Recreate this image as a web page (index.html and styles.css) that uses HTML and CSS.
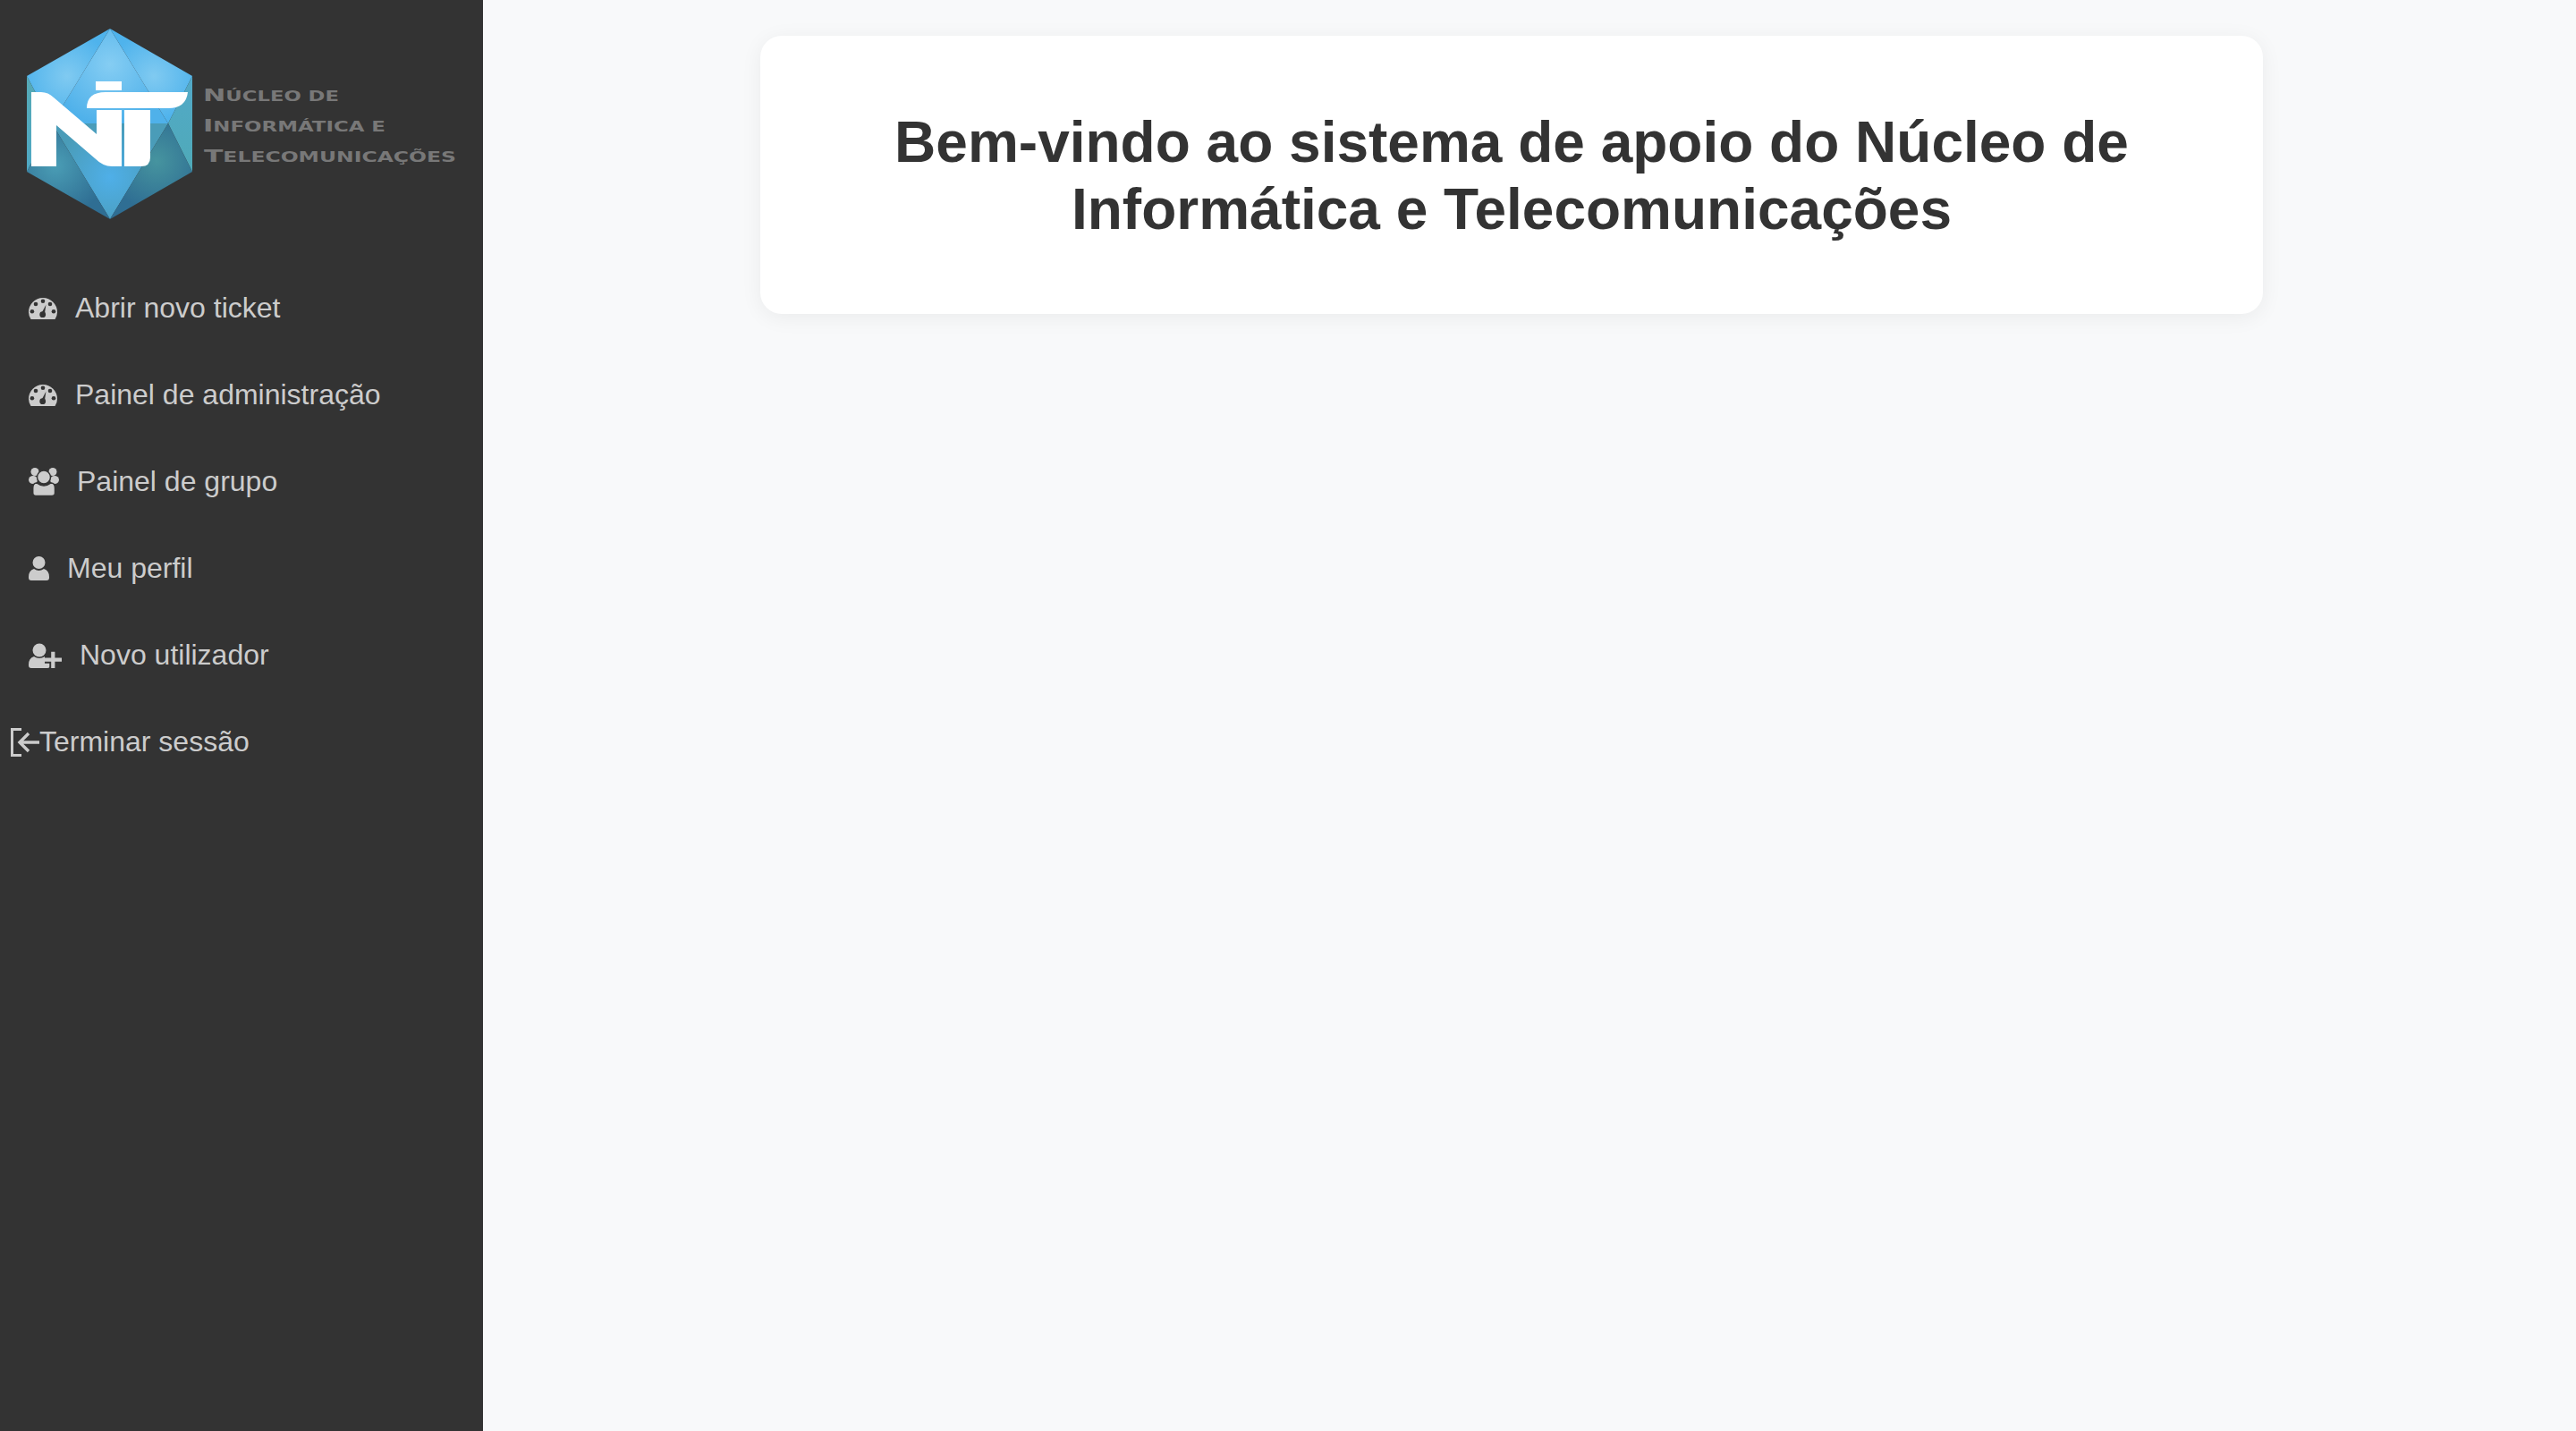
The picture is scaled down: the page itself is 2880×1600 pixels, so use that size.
FILE: index.html
```html
<!DOCTYPE html>
<html lang="pt">
<head>
    <meta charset="UTF-8">
    <meta name="viewport" content="width=device-width, initial-scale=1.0">
    <title>Núcleo de Informática e Telecomunicações</title>
    <link rel="stylesheet" href="styles.css">
</head>
<body>
    <aside class="sidebar">
        <div class="logo">
            <svg class="logo-svg" width="540" height="296" viewBox="0 0 540 296" xmlns="http://www.w3.org/2000/svg">
                <defs>
                    <radialGradient id="topCenter" gradientUnits="userSpaceOnUse" cx="123" cy="72" r="68">
                        <stop offset="0" stop-color="#85cdf3"/>
                        <stop offset="1" stop-color="#4fb1ea"/>
                    </radialGradient>
                    <radialGradient id="topLeft" gradientUnits="userSpaceOnUse" cx="75" cy="85" r="50">
                        <stop offset="0" stop-color="#80caf1"/>
                        <stop offset="1" stop-color="#4fb3ec"/>
                    </radialGradient>
                    <radialGradient id="topRight" gradientUnits="userSpaceOnUse" cx="172" cy="85" r="50">
                        <stop offset="0" stop-color="#80caf1"/>
                        <stop offset="1" stop-color="#4fb3ec"/>
                    </radialGradient>
                    <radialGradient id="botCenter" gradientUnits="userSpaceOnUse" cx="123" cy="198" r="62">
                        <stop offset="0" stop-color="#4fafe8"/>
                        <stop offset="1" stop-color="#4a9cb8"/>
                    </radialGradient>
                    <radialGradient id="botLeft" gradientUnits="userSpaceOnUse" cx="62" cy="185" r="58">
                        <stop offset="0" stop-color="#4a9db5"/>
                        <stop offset="1" stop-color="#2f6e93"/>
                    </radialGradient>
                    <radialGradient id="botRight" gradientUnits="userSpaceOnUse" cx="175" cy="180" r="55">
                        <stop offset="0" stop-color="#46949f"/>
                        <stop offset="1" stop-color="#2f6e93"/>
                    </radialGradient>
                    <linearGradient id="sideLeft" x1="0" y1="0" x2="0" y2="1">
                        <stop offset="0" stop-color="#55a9b5"/>
                        <stop offset="1" stop-color="#4fa8c4"/>
                    </linearGradient>
                    <linearGradient id="sideRight" x1="0" y1="0" x2="0" y2="1">
                        <stop offset="0" stop-color="#52a9c8"/>
                        <stop offset="1" stop-color="#4faab8"/>
                    </linearGradient>
                </defs>
                <polygon points="123,32 58,138 188,138" fill="url(#topCenter)"/>
                <polygon points="123,32 30,85 58,138" fill="url(#topLeft)"/>
                <polygon points="123,32 215,85 188,138" fill="url(#topRight)"/>
                <polygon points="30,85 58,138 30,192" fill="url(#sideLeft)"/>
                <polygon points="215,85 188,138 215,192" fill="url(#sideRight)"/>
                <polygon points="58,138 188,138 123,245" fill="url(#botCenter)"/>
                <polygon points="30,192 58,138 123,245" fill="url(#botLeft)"/>
                <polygon points="215,192 188,138 123,245" fill="url(#botRight)"/>
                <path fill="#fff" d="M35 103 H46 Q54 103 60 109 L108 150 V123 H136 V186 H125 Q115 186 106 177 L63 140 V186 H35 Z"/>
                <path fill="#fff" d="M139 123 H168 V176 Q168 186 158 186 H139 Z"/>
                <path fill="#fff" d="M97 121 Q97 103 118 103 H210 Q208 121 188 121 Z"/>
                <rect fill="#fff" x="107" y="91" width="29" height="10"/>
                <text class="logo-text" x="227" y="113" textLength="152" lengthAdjust="spacingAndGlyphs"><tspan class="logo-cap">N</tspan>úcleo de</text>
                <text class="logo-text" x="227" y="147" textLength="204" lengthAdjust="spacingAndGlyphs"><tspan class="logo-cap">I</tspan>nformática e</text>
                <text class="logo-text" x="228" y="181" textLength="282" lengthAdjust="spacingAndGlyphs"><tspan class="logo-cap">T</tspan>elecomunicações</text>
            </svg>
        </div>
        <nav class="nav">
            <a class="nav-item" href="#">
                <svg class="icon" width="32" height="24" viewBox="0 0 32 24">
                    <path fill="#ccc" d="M2.5 24 Q0 20 0 16 A16 16 0 0 1 32 16 Q32 20 29.5 24 Z"/>
                    <g fill="#333">
                        <circle cx="8" cy="7" r="2.3"/><circle cx="16" cy="3.7" r="2.3"/><circle cx="24" cy="7" r="2.3"/>
                        <circle cx="3.9" cy="15.3" r="2.3"/><circle cx="28" cy="15.3" r="2.3"/>
                        <circle cx="15.7" cy="18.7" r="3.4"/>
                        <path d="M19.4 7.7 L17.8 18.5 L14 18 Z"/>
                    </g>
                </svg>
                <span>Abrir novo ticket</span>
            </a>
            <a class="nav-item" href="#">
                <svg class="icon" width="32" height="24" viewBox="0 0 32 24">
                    <path fill="#ccc" d="M2.5 24 Q0 20 0 16 A16 16 0 0 1 32 16 Q32 20 29.5 24 Z"/>
                    <g fill="#333">
                        <circle cx="8" cy="7" r="2.3"/><circle cx="16" cy="3.7" r="2.3"/><circle cx="24" cy="7" r="2.3"/>
                        <circle cx="3.9" cy="15.3" r="2.3"/><circle cx="28" cy="15.3" r="2.3"/>
                        <circle cx="15.7" cy="18.7" r="3.4"/>
                        <path d="M19.4 7.7 L17.8 18.5 L14 18 Z"/>
                    </g>
                </svg>
                <span>Painel de administração</span>
            </a>
            <a class="nav-item" href="#">
                <svg class="icon" width="34" height="32" viewBox="0 0 34 32">
                    <g fill="#ccc">
                        <circle cx="7" cy="4.5" r="4.5"/><circle cx="27" cy="4.5" r="4.5"/>
                        <ellipse cx="5" cy="13.5" rx="5" ry="4.5"/><ellipse cx="29" cy="13.5" rx="5" ry="4.5"/>
                        <circle cx="17" cy="10.5" r="7.5" stroke="#333" stroke-width="1.5"/>
                        <path stroke="#333" stroke-width="1.5" d="M4.7 28 Q4.7 31.5 8 31.5 H26 Q29.5 31.5 29.5 28 V23 Q29.5 17 25 17 Q21 20 17 20 Q13 20 9 17 Q4.7 17 4.7 23 Z"/>
                    </g>
                </svg>
                <span>Painel de grupo</span>
            </a>
            <a class="nav-item" href="#">
                <svg class="icon" width="23" height="27" viewBox="0 0 23 27">
                    <g fill="#ccc">
                        <circle cx="11.5" cy="7" r="7"/>
                        <path d="M0 23 Q0 16 6 14 Q11.5 18 17 14 Q23 16 23 23 V24 Q23 27 20 27 H3 Q0 27 0 24 Z"/>
                    </g>
                </svg>
                <span>Meu perfil</span>
            </a>
            <a class="nav-item" href="#">
                <svg class="icon" width="37" height="28" viewBox="0 0 37 28">
                    <g fill="#ccc">
                        <circle cx="12" cy="8" r="7.5"/>
                        <path d="M0 24 Q0 17 6 15 Q12 19 18 15 Q24 17 24 24 V25 Q24 28 21 28 H3 Q0 28 0 25 Z"/>
                    </g>
                    <path fill="none" stroke="#333" stroke-width="8" d="M18 18.7 H37 M27.3 9.7 V28"/>
                    <path fill="none" stroke="#ccc" stroke-width="4.2" d="M18 18.7 H37 M27.3 9.7 V28"/>
                </svg>
                <span>Novo utilizador</span>
            </a>
            <a class="nav-item logout" href="#">
                <svg class="icon" width="32" height="32" viewBox="0 0 32 32">
                    <path fill="none" stroke="#ccc" stroke-width="3" d="M12 1.5 H1.5 V30.5 H12"/>
                    <path fill="none" stroke="#ccc" stroke-width="3.4" d="M32 16 H10 M20 6 L10 16 L20 26"/>
                </svg>
                <span>Terminar sessão</span>
            </a>
        </nav>
    </aside>

    <main class="content">
        <div class="welcome-card">
            <h1>Bem-vindo ao sistema de apoio do Núcleo de Informática e Telecomunicações</h1>
        </div>
    </main>
</body>
</html>
```

FILE: styles.css
```css
/* Global Styles */
* {
    margin: 0;
    padding: 0;
    box-sizing: border-box;
}

html, body {
    height: 100%;
}

body {
    display: flex;
    background-color: #f8f9fa;
    color: #333;
    font-family: "Liberation Sans", Arial, sans-serif;
}

a {
    text-decoration: none;
    color: inherit;
}

/* Sidebar */
.sidebar {
    width: 540px;
    flex-shrink: 0;
    background-color: #333;
}

.logo {
    height: 296px;
}

.logo-svg {
    display: block;
}

.logo-text {
    font-family: "DejaVu Sans", Arial, sans-serif;
    font-size: 15px;
    font-weight: bold;
    text-transform: uppercase;
    fill: #787878;
}

.logo-cap {
    font-size: 20px;
}

.nav {
    display: flex;
    flex-direction: column;
}

.nav-item {
    display: flex;
    align-items: center;
    gap: 20px;
    height: 97px;
    padding-left: 32px;
    color: #ccc;
    font-size: 32px;
}

.nav-item.logout {
    gap: 0;
    padding-left: 12px;
}

.icon {
    flex-shrink: 0;
}

/* Main content */
.content {
    flex: 1;
    padding: 40px 40px 0 0;
}

.welcome-card {
    width: 1680px;
    margin: 0 auto;
    padding: 82px 40px 79px;
    background-color: #fff;
    border-radius: 24px;
    box-shadow: 0 4px 24px rgba(0, 0, 0, 0.06);
    text-align: center;
}

.welcome-card h1 {
    font-size: 64px;
    font-weight: bold;
    line-height: 75px;
}
```
